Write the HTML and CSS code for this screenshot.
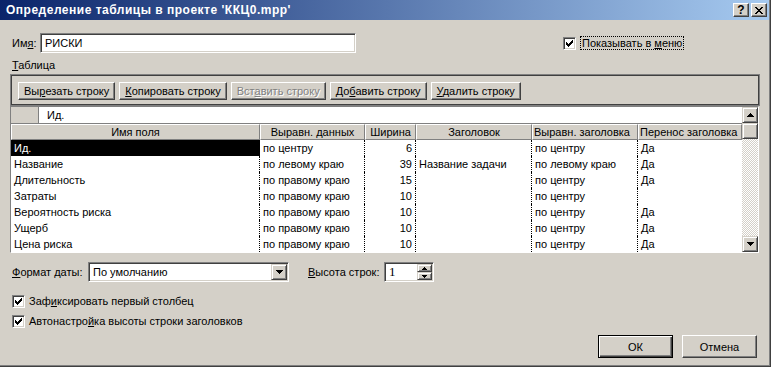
FILE: index.html
```html
<!DOCTYPE html>
<html lang="ru">
<head>
  <meta charset="UTF-8">
  <title>Определение таблицы</title>
  <link rel="stylesheet" href="styles.css">
</head>
<body>

<div class="window">
  <div class="titlebar">
    <span class="title">Определение таблицы в проекте 'ККЦ0.mpp'</span>
    <div class="caption-btns">
      <button class="cap-btn">?</button>
      <button class="cap-btn">
        <svg width="8" height="7" viewBox="0 0 8 7" shape-rendering="crispEdges"><path d="M0 0h2v1h1v1h2v-1h1v-1h2v1h-1v1h-1v1h-1v1h1v1h1v1h1v1h-2v-1h-1v-1h-2v1h-1v1h-2v-1h1v-1h1v-1h1v-1h-1v-1h-1v-1h-1z" fill="#000"/></svg>
      </button>
    </div>
  </div>

  <div class="client">
    <div class="name-row">
      <span class="name-lbl">Им<u>я</u>:</span>
      <div class="field name-field">РИСКИ</div>
      <label class="check show-menu">
        <span class="box"><svg width="7" height="7" viewBox="0 0 7 7" shape-rendering="crispEdges"><path d="M0 2h1v3h-1zM1 3h1v3h-1zM2 4h1v3h-1zM3 3h1v3h-1zM4 2h1v3h-1zM5 1h1v3h-1zM6 0h1v3h-1z"/></svg></span>
        <span class="focus">Показывать в <u>м</u>еню</span>
      </label>
    </div>

    <div class="group-lbl"><u>Т</u>аблица</div>

    <div class="toolbar">
      <button class="tb-btn">Вы<u>р</u>езать строку</button>
      <button class="tb-btn"><u>К</u>опировать строку</button>
      <button class="tb-btn disabled">Вст<u>а</u>вить строку</button>
      <button class="tb-btn">До<u>б</u>авить строку</button>
      <button class="tb-btn"><u>У</u>далить строку</button>
    </div>

    <div class="grid">
      <div class="grid-main">
        <div class="edit-row">
          <div class="corner"></div>
          <div class="edit-val">Ид.</div>
        </div>
        <div class="g-row head">
          <div class="hc">Имя поля</div>
          <div class="hc">Выравн. данных</div>
          <div class="hc">Ширина</div>
          <div class="hc">Заголовок</div>
          <div class="hc">Выравн. заголовка</div>
          <div class="hc">Перенос заголовка</div>
        </div>
        <div class="g-body">
          <div class="g-row">
            <div class="c sel">Ид.</div><div class="c">по центру</div><div class="c num">6</div><div class="c"></div><div class="c">по центру</div><div class="c last">Да</div>
          </div>
          <div class="g-row">
            <div class="c">Название</div><div class="c">по левому краю</div><div class="c num">39</div><div class="c">Название задачи</div><div class="c">по левому краю</div><div class="c last">Да</div>
          </div>
          <div class="g-row">
            <div class="c">Длительность</div><div class="c">по правому краю</div><div class="c num">15</div><div class="c"></div><div class="c">по центру</div><div class="c last">Да</div>
          </div>
          <div class="g-row">
            <div class="c">Затраты</div><div class="c">по правому краю</div><div class="c num">10</div><div class="c"></div><div class="c">по центру</div><div class="c last"></div>
          </div>
          <div class="g-row">
            <div class="c">Вероятность риска</div><div class="c">по правому краю</div><div class="c num">10</div><div class="c"></div><div class="c">по центру</div><div class="c last">Да</div>
          </div>
          <div class="g-row">
            <div class="c">Ущерб</div><div class="c">по правому краю</div><div class="c num">10</div><div class="c"></div><div class="c">по центру</div><div class="c last">Да</div>
          </div>
          <div class="g-row">
            <div class="c">Цена риска</div><div class="c">по правому краю</div><div class="c num">10</div><div class="c"></div><div class="c">по центру</div><div class="c last">Да</div>
          </div>
        </div>
      </div>
      <div class="vscroll">
        <div class="sb-btn"><svg width="7" height="4" viewBox="0 0 7 4" shape-rendering="crispEdges"><path d="M3 0h1v1h1v1h1v1h1v1h-7v-1h1v-1h1v-1h1z"/></svg></div>
        <div class="sb-btn"></div>
        <div class="sb-track"></div>
        <div class="sb-btn"><svg width="7" height="4" viewBox="0 0 7 4" shape-rendering="crispEdges"><path d="M0 0h7v1h-1v1h-1v1h-1v1h-1v-1h-1v-1h-1v-1h-1z"/></svg></div>
      </div>
    </div>

    <div class="opt-row">
      <span class="opt-lbl"><u>Ф</u>ормат даты:</span>
      <div class="field combo">
        <span class="combo-val">По умолчанию</span>
        <span class="drop-btn"><svg width="7" height="4" viewBox="0 0 7 4" shape-rendering="crispEdges"><path d="M0 0h7v1h-1v1h-1v1h-1v1h-1v-1h-1v-1h-1v-1h-1z"/></svg></span>
      </div>
      <span class="opt-lbl height-lbl"><u>В</u>ысота строк:</span>
      <div class="field spin">
        <span class="spin-val">1</span>
        <span class="spin-btns">
          <span class="spin-btn"><svg width="5" height="3" viewBox="0 0 5 3" shape-rendering="crispEdges"><path d="M2 0h1v1h1v1h1v1h-5v-1h1v-1h1z"/></svg></span>
          <span class="spin-btn"><svg width="5" height="3" viewBox="0 0 5 3" shape-rendering="crispEdges"><path d="M0 0h5v1h-1v1h-1v1h-1v-1h-1v-1h-1z"/></svg></span>
        </span>
      </div>
    </div>

    <label class="check check-row first">
      <span class="box"><svg width="7" height="7" viewBox="0 0 7 7" shape-rendering="crispEdges"><path d="M0 2h1v3h-1zM1 3h1v3h-1zM2 4h1v3h-1zM3 3h1v3h-1zM4 2h1v3h-1zM5 1h1v3h-1zM6 0h1v3h-1z"/></svg></span>
      <span>Заф<u>и</u>ксировать первый столбец</span>
    </label>
    <label class="check check-row">
      <span class="box"><svg width="7" height="7" viewBox="0 0 7 7" shape-rendering="crispEdges"><path d="M0 2h1v3h-1zM1 3h1v3h-1zM2 4h1v3h-1zM3 3h1v3h-1zM4 2h1v3h-1zM5 1h1v3h-1zM6 0h1v3h-1z"/></svg></span>
      <span>Автонастро<u>й</u>ка высоты строки заголовков</span>
    </label>

    <div class="dlg-btns">
      <button class="push default">ОК</button>
      <button class="push">Отмена</button>
    </div>
  </div>
</div>

</body>
</html>
```

FILE: styles.css
```css
* { margin: 0; padding: 0; box-sizing: border-box; }
body {
  font-family: "Liberation Sans", Arial, sans-serif;
  font-size: 11px;
  color: #000;
  background: #d4d0c8;
}
button { font: inherit; color: inherit; background: #d4d0c8; cursor: default; }
svg { display: block; }

.window {
  width: 771px;
  height: 367px;
  background: #d4d0c8;
  border-right: 1px solid #404040;
  border-bottom: 1px solid #404040;
  box-shadow: inset -1px -1px #808080;
}

/* title bar */
.titlebar {
  height: 20px;
  margin-right: 1px;
  padding: 0 2px 0 6px;
  display: flex;
  align-items: center;
  justify-content: space-between;
  background: linear-gradient(to right, #0a246a, #a6caf0);
  color: #fff;
  font-weight: bold;
  font-size: 12px;
  letter-spacing: 0.5px;
}
.caption-btns { display: flex; gap: 2px; letter-spacing: 0; }
.cap-btn {
  width: 16px;
  height: 14px;
  display: flex;
  align-items: center;
  justify-content: center;
  font-weight: bold;
  font-size: 12px;
  line-height: 1;
  color: #000;
  border: 1px solid;
  border-color: #fff #404040 #404040 #fff;
  box-shadow: inset -1px -1px #808080;
}

.client { padding: 13px 10px 0 10px; }

/* sunken fields */
.field {
  background: #fff;
  border: 1px solid;
  border-color: #808080 #fff #fff #808080;
  box-shadow: inset 1px 1px #404040, inset -1px -1px #d4d0c8;
}

.name-row { height: 20px; display: flex; align-items: center; }
.name-lbl { width: 30px; padding-left: 2px; }
.name-field {
  width: 316px;
  height: 20px;
  padding-left: 4px;
  line-height: 18px;
}
.show-menu { margin-left: 207px; }
.focus { border: 1px dotted #000; padding: 0 1px; line-height: 12px; }

/* checkbox */
.check { display: flex; align-items: center; gap: 4px; }
.box {
  width: 13px;
  height: 13px;
  background: #fff;
  border: 1px solid;
  border-color: #808080 #fff #fff #808080;
  box-shadow: inset 1px 1px #404040, inset -1px -1px #d4d0c8;
  padding: 2px;
}

.group-lbl { margin-top: 6px; height: 13px; line-height: 13px; padding-left: 2px; }

/* toolbar */
.toolbar {
  margin-top: 2px;
  height: 32px;
  border: 1px solid #808080;
  box-shadow: inset 0 0 0 1px #404040;
  padding: 7px 0 0 7px;
  display: flex;
  align-items: flex-start;
  gap: 4px;
}
.tb-btn {
  height: 18px;
  padding: 0 5px;
  line-height: 15px;
  border: 1px solid;
  border-color: #fff #404040 #404040 #fff;
  box-shadow: inset -1px -1px #808080;
}
.tb-btn.disabled { color: #808080; text-shadow: 1px 1px #fff; }

/* grid */
.grid {
  width: 749px;
  height: 147px;
  display: flex;
  border: 1px solid;
  border-color: #808080 #fff #fff #808080;
}
.grid-main { width: 731px; background: #fff; }
.edit-row { height: 17px; display: flex; border-bottom: 1px solid #808080; }
.corner { width: 28px; background: #d4d0c8; border-right: 1px solid #808080; }
.edit-val { flex: 1; padding-left: 8px; line-height: 16px; }

.g-row {
  display: grid;
  grid-template-columns: 249px 105px 51px 116px 106px 104px;
  height: 16px;
}
.hc {
  background: #d4d0c8;
  border: 1px solid;
  border-color: #fff #808080 #808080 #fff;
  text-align: center;
  line-height: 14px;
  white-space: nowrap;
  overflow: hidden;
}
.hc:nth-child(5), .hc:nth-child(6) { text-align: left; padding-left: 1px; }
.c {
  padding: 0 3px;
  line-height: 16px;
  white-space: nowrap;
  overflow: hidden;
  border-right: 1px dotted #000;
}
.c.last { border-right: none; }
.c.num { text-align: right; }
.c.sel { background: #000; color: #fff; }

.vscroll { width: 16px; display: flex; flex-direction: column; }
.sb-btn {
  width: 16px;
  height: 16px;
  display: flex;
  align-items: center;
  justify-content: center;
  background: #d4d0c8;
  border: 1px solid;
  border-color: #d4d0c8 #404040 #404040 #d4d0c8;
  box-shadow: inset 1px 1px #fff, inset -1px -1px #808080;
}
.sb-track {
  flex: 1;
  background: repeating-conic-gradient(#fff 0 25%, #d4d0c8 0 50%) 0 0 / 2px 2px;
}

/* options */
.opt-row { margin-top: 9px; height: 20px; display: flex; align-items: center; }
.opt-lbl { width: 78px; padding-left: 2px; }
.height-lbl { margin-left: 17px; }
.combo {
  width: 201px;
  height: 20px;
  padding: 1px;
  display: flex;
  align-items: center;
}
.combo-val { flex: 1; padding-left: 3px; }
.drop-btn {
  width: 16px;
  height: 16px;
  display: flex;
  align-items: center;
  justify-content: center;
  background: #d4d0c8;
  border: 1px solid;
  border-color: #d4d0c8 #404040 #404040 #d4d0c8;
  box-shadow: inset 1px 1px #fff, inset -1px -1px #808080;
}
.spin {
  width: 50px;
  height: 20px;
  padding: 1px;
  display: flex;
}
.spin-val {
  flex: 1;
  padding-left: 3px;
  font-family: "Liberation Serif", serif;
  font-size: 13px;
  line-height: 16px;
}
.spin-btns { width: 15px; display: flex; flex-direction: column; }
.spin-btn {
  height: 8px;
  display: flex;
  align-items: center;
  justify-content: center;
  background: #d4d0c8;
  border: 1px solid;
  border-color: #d4d0c8 #404040 #404040 #d4d0c8;
  box-shadow: inset 1px 1px #fff, inset -1px -1px #808080;
}

.check-row { height: 20px; padding-left: 2px; }
.check-row.first { margin-top: 9px; }

/* dialog buttons */
.dlg-btns {
  margin-top: 4px;
  padding-right: 3px;
  display: flex;
  justify-content: flex-end;
  gap: 9px;
}
.push {
  width: 75px;
  height: 23px;
  border: 1px solid;
  border-color: #fff #404040 #404040 #fff;
  box-shadow: inset -1px -1px #808080;
}
.push.default {
  border-color: #000;
  box-shadow: inset 1px 1px #fff, inset -1px -1px #404040, inset -2px -2px #808080;
}
```
